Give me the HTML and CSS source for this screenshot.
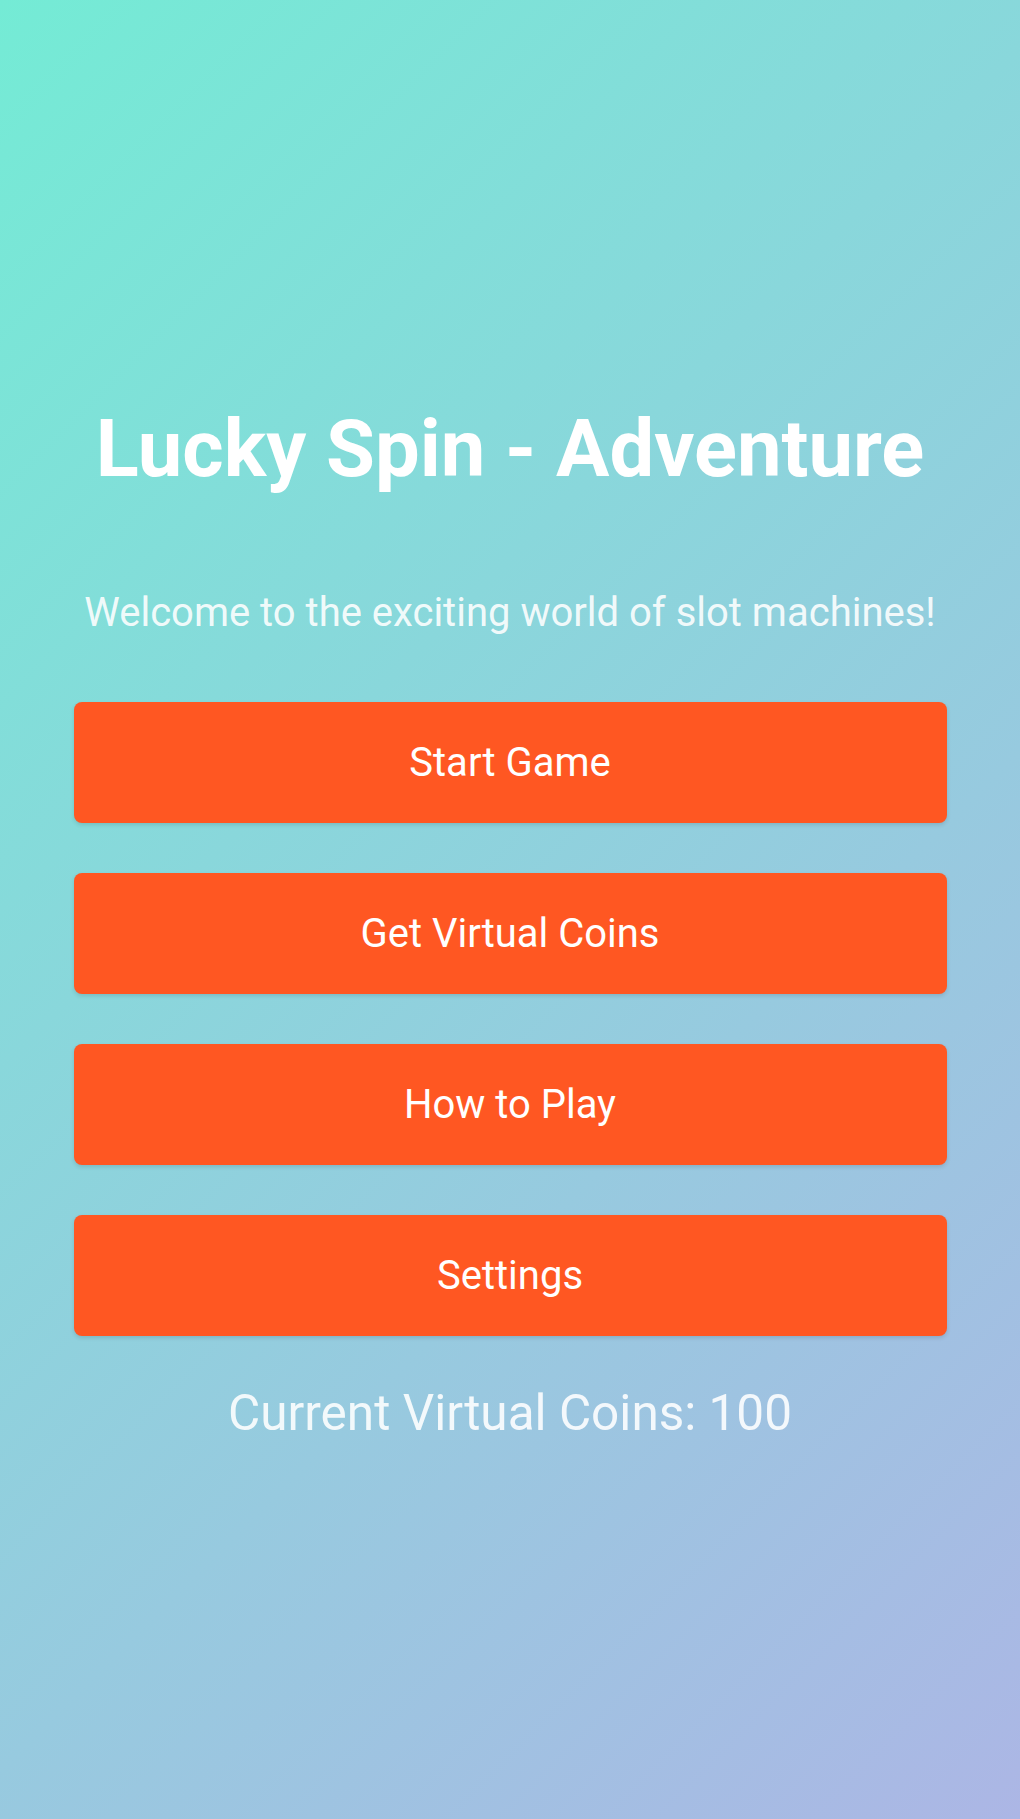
FILE: index.html
```html
<!DOCTYPE html>
<html lang="en">
<head>
<meta charset="utf-8">
<title>Lucky Spin - Adventure</title>
<link rel="stylesheet" href="styles.css">
</head>
<body>
<main class="screen">
  <h1 class="title">Lucky Spin - Adventure</h1>
  <p class="subtitle">Welcome to the exciting world of slot machines!</p>
  <div class="menu">
    <button class="btn">Start Game</button>
    <button class="btn">Get Virtual Coins</button>
    <button class="btn">How to Play</button>
    <button class="btn">Settings</button>
  </div>
  <p class="coins">Current Virtual Coins: 100</p>
</main>
</body>
</html>
```

FILE: styles.css
```css
html, body {
  margin: 0;
  padding: 0;
}
body {
  min-height: 1819px;
  background: linear-gradient(135deg, #74ebd5 0%, #acb6e5 100%);
  font-family: Roboto, "Liberation Sans", Arial, sans-serif;
  color: #ffffff;
}
.screen {
  display: flex;
  flex-direction: column;
  align-items: center;
  padding-top: 402px;
  text-align: center;
}
.title {
  margin: 0;
  font-size: 79.5px;
  line-height: 94px;
  font-weight: 700;
  color: #ffffff;
}
.subtitle {
  margin: 93px 0 0;
  font-size: 40px;
  line-height: 47px;
  font-weight: 400;
  color: rgba(255, 255, 255, 0.9);
}
.menu {
  margin-top: 66px;
  width: 873px;
  display: flex;
  flex-direction: column;
  gap: 50px;
}
.btn {
  height: 121px;
  border: none;
  border-radius: 8px;
  background: #ff5722;
  color: #ffffff;
  font-family: Roboto, "Liberation Sans", Arial, sans-serif;
  font-size: 40px;
  font-weight: 400;
  box-shadow: 0 2px 4px rgba(0, 0, 0, 0.12);
  cursor: pointer;
}
.coins {
  margin: 48px 0 0;
  font-size: 49.5px;
  line-height: 59px;
  font-weight: 400;
  color: rgba(255, 255, 255, 0.88);
}
```
